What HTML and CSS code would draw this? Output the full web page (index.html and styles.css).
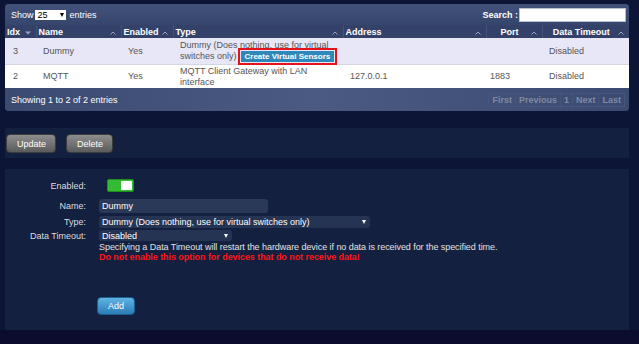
FILE: index.html
```html
<!DOCTYPE html>
<html lang="en">
<head>
    <meta charset="UTF-8">
    <title>Hardware</title>
    <link rel="stylesheet" href="styles.css">
</head>
<body>
    <div class="page">
        <div class="grid-panel">
            <div class="grid-toolbar">
                <span>Show</span>
                <span class="mini-select">25<span class="arrow dark"></span></span>
                <span>entries</span>
                <span class="search-label">Search :</span>
                <span class="search-input"></span>
            </div>
            <table class="grid">
                <colgroup>
                    <col class="c-idx"><col class="c-name"><col class="c-enabled"><col class="c-type">
                    <col class="c-address"><col class="c-port"><col class="c-timeout">
                </colgroup>
                <thead>
                    <tr>
                        <th>Idx<span class="sort"><svg width="6" height="4" viewBox="0 0 6 4"><path d="M0 0.5H6L3 3.5Z" fill="#9aa4bf"/></svg></span></th>
                        <th>Name<span class="sort"><svg width="6" height="4" viewBox="0 0 6 4"><path d="M0.5 3.5L3 1L5.5 3.5" fill="none" stroke="#9aa4bf" stroke-width="1"/></svg></span></th>
                        <th>Enabled<span class="sort"><svg width="6" height="4" viewBox="0 0 6 4"><path d="M0.5 3.5L3 1L5.5 3.5" fill="none" stroke="#9aa4bf" stroke-width="1"/></svg></span></th>
                        <th>Type<span class="sort"><svg width="6" height="4" viewBox="0 0 6 4"><path d="M0.5 3.5L3 1L5.5 3.5" fill="none" stroke="#9aa4bf" stroke-width="1"/></svg></span></th>
                        <th>Address<span class="sort"><svg width="6" height="4" viewBox="0 0 6 4"><path d="M0.5 3.5L3 1L5.5 3.5" fill="none" stroke="#9aa4bf" stroke-width="1"/></svg></span></th>
                        <th class="center">Port<span class="sort"><svg width="6" height="4" viewBox="0 0 6 4"><path d="M0.5 3.5L3 1L5.5 3.5" fill="none" stroke="#9aa4bf" stroke-width="1"/></svg></span></th>
                        <th class="center">Data Timeout<span class="sort"><svg width="6" height="4" viewBox="0 0 6 4"><path d="M0.5 3.5L3 1L5.5 3.5" fill="none" stroke="#9aa4bf" stroke-width="1"/></svg></span></th>
                    </tr>
                </thead>
                <tbody>
                    <tr class="row-selected">
                        <td class="idx">3</td>
                        <td>Dummy</td>
                        <td>Yes</td>
                        <td>Dummy (Does nothing, use for virtual switches only)<span class="btn-sensors">Create Virtual Sensors</span></td>
                        <td></td>
                        <td class="port"></td>
                        <td>Disabled</td>
                    </tr>
                    <tr class="row-plain">
                        <td class="idx">2</td>
                        <td>MQTT</td>
                        <td>Yes</td>
                        <td>MQTT Client Gateway with LAN interface</td>
                        <td>127.0.0.1</td>
                        <td class="port">1883</td>
                        <td>Disabled</td>
                    </tr>
                </tbody>
            </table>
            <div class="grid-footer">
                <span>Showing 1 to 2 of 2 entries</span>
                <div class="pager">
                    <span>First</span><span>Previous</span><span>1</span><span>Next</span><span>Last</span>
                </div>
            </div>
        </div>

        <div class="btn-panel">
            <span class="btn-gray">Update</span>
            <span class="btn-gray">Delete</span>
        </div>

        <div class="form-panel">
            <div class="form-row r-enabled">
                <label>Enabled:</label>
                <span class="toggle"><span class="knob"></span></span>
            </div>
            <div class="form-row r-name">
                <label>Name:</label>
                <span class="text-input">Dummy</span>
            </div>
            <div class="form-row r-type">
                <label>Type:</label>
                <span class="select select-type">Dummy (Does nothing, use for virtual switches only)<span class="arrow"></span></span>
            </div>
            <div class="form-row r-timeout">
                <label>Data Timeout:</label>
                <span class="select select-timeout">Disabled<span class="arrow"></span></span>
            </div>
            <div class="help">
                <div>Specifying a Data Timeout will restart the hardware device if no data is received for the specified time.</div>
                <div class="warn">Do not enable this option for devices that do not receive data!</div>
            </div>
            <span class="btn-blue">Add</span>
        </div>
    </div>
    <div class="bottom-strip"></div>
</body>
</html>
```

FILE: styles.css
```css
body {
    margin: 0;
    background-color: #0c1535;
    font-family: "Liberation Sans", Arial, sans-serif;
    font-size: 9px;
}
.page {
    width: 624px;
    padding: 4px 0 0 5px;
}
.grid-panel {
    border-radius: 4px;
    overflow: hidden;
    background-color: #3b4a70;
}
.grid-toolbar {
    height: 21px;
    display: flex;
    align-items: center;
    padding: 0 3px 0 6px;
    color: #fff;
    background: linear-gradient(#43527b, #36456b);
}
.mini-select {
    display: inline-flex;
    align-items: center;
    justify-content: space-between;
    width: 26px;
    height: 10px;
    margin: 0 4px 0 1px;
    padding: 0 2px 0 3px;
    background-color: #fff;
    color: #000;
}
.search-label {
    margin-left: auto;
    margin-right: 1px;
    font-weight: bold;
}
.search-input {
    width: 105px;
    height: 12px;
    background-color: #fff;
    border: 1px solid #b8bfcf;
}
.arrow {
    width: 0;
    height: 0;
    border-left: 2.5px solid transparent;
    border-right: 2.5px solid transparent;
    border-top: 4px solid #fff;
}
.arrow.dark {
    border-top-color: #000;
}
.grid {
    width: 624px;
    table-layout: fixed;
    border-collapse: collapse;
}
.c-idx { width: 31px; }
.c-name { width: 85px; }
.c-enabled { width: 52px; }
.c-type { width: 170px; }
.c-address { width: 143px; }
.c-port { width: 56px; }
.c-timeout { width: 87px; }
.grid th {
    height: 13px;
    padding: 0 5px 0 2px;
    background-color: #34426a;
    border-left: 1px solid #45537a;
    color: #fff;
    font-weight: bold;
    text-align: left;
    line-height: 12px;
}
.grid th:first-child {
    border-left: none;
}
.grid th.center {
    text-align: center;
}
.sort {
    float: right;
    line-height: 12px;
}
.grid td {
    padding: 0 7px;
    color: #555;
    line-height: 10.5px;
    vertical-align: middle;
}
.grid td.idx {
    padding-left: 8px;
}
.grid td.port {
    padding-left: 4px;
}
.row-selected td {
    height: 26px;
    background-color: #e7e7f8;
    border-bottom: 1px solid #d4d6e6;
}
.row-plain td {
    height: 23px;
    background-color: #fff;
}
.btn-sensors {
    display: inline-block;
    padding: 1px 4px;
    margin-left: 4px;
    background-color: #2f88ba;
    color: #fff;
    font-size: 8px;
    font-weight: bold;
    line-height: 9px;
    outline: 2px solid #e4121b;
    outline-offset: 1px;
}
.grid-footer {
    height: 23px;
    display: flex;
    align-items: center;
    justify-content: space-between;
    padding: 0 4px 0 6px;
    color: #fff;
    background: linear-gradient(90deg, #3b4a70, #4b5a80 50%, #3b4a70);
}
.pager {
    display: flex;
}
.pager span {
    padding: 1px 3px;
    color: #7e8aa6;
    font-weight: bold;
    border: 1px solid #46557b;
    margin-left: -1px;
}
.btn-panel {
    margin-top: 17px;
    height: 18px;
    padding: 6px 1px;
    display: flex;
    gap: 10px;
    background-color: #142040;
}
.btn-gray {
    display: inline-flex;
    align-items: center;
    height: 17px;
    padding: 0 9px 0 10px;
    color: #fff;
    background: linear-gradient(#8d8d8d, #5b5b5b);
    border: 1px solid #3d3d3d;
    border-radius: 4px;
}
.form-panel {
    margin-top: 11px;
    padding: 10px 0 15px;
    background-color: #142040;
}
.form-row {
    display: flex;
    align-items: center;
}
.form-row label {
    width: 81px;
    text-align: right;
    color: #ddd;
}
.r-enabled { height: 13px; }
.r-name { height: 14px; margin-top: 7px; }
.r-type { height: 12px; margin-top: 3px; }
.r-timeout { height: 11px; margin-top: 2px; }
.toggle {
    display: flex;
    justify-content: flex-end;
    align-items: center;
    width: 25px;
    height: 11px;
    margin-left: 21px;
    background-color: #33bb33;
    border: 1px solid #1f8f1f;
    border-radius: 2px;
}
.knob {
    width: 11px;
    height: 9px;
    margin-right: 1px;
    background-color: #fff;
    border-radius: 1px;
}
.text-input {
    display: flex;
    align-items: center;
    width: 166px;
    height: 14px;
    margin-left: 13px;
    padding-left: 3px;
    color: #fff;
    background-color: #2a3957;
    border-radius: 3px;
}
.select {
    display: flex;
    align-items: center;
    justify-content: space-between;
    margin-left: 13px;
    padding: 0 4px 0 3px;
    color: #fff;
    background-color: #263453;
    border-radius: 3px;
}
.select-type {
    width: 264px;
    height: 12px;
}
.select-timeout {
    width: 126px;
    height: 11px;
}
.help {
    margin: 1px 0 0 94px;
    color: #e2e2e2;
    line-height: 10px;
    letter-spacing: -0.06px;
}
.warn {
    color: #ff1414;
    font-weight: bold;
}
.btn-blue {
    display: inline-flex;
    align-items: center;
    justify-content: center;
    width: 36px;
    height: 16px;
    margin: 35px 0 0 92px;
    color: #fff;
    background: linear-gradient(#5fb4e4, #2c7cb6);
    border: 1px solid #1d5f8f;
    border-radius: 4px;
}
.bottom-strip {
    height: 14px;
    background-color: #0b0c2e;
}
```
